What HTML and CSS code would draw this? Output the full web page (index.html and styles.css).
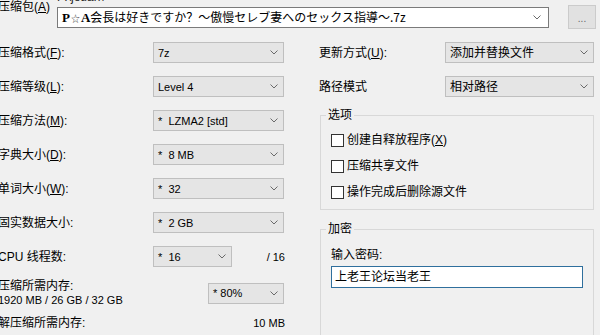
FILE: index.html
```html
<!DOCTYPE html>
<html lang="zh">
<head>
<meta charset="utf-8">
<title>添加到压缩包</title>
<link rel="stylesheet" href="styles.css">
</head>
<body>
<div class="dialog">
  <div class="top">
    <div class="top-lbl">压缩包(<u>A</u>)</div>
    <div class="archive">
      <div class="path">F:\jeuan\</div>
      <div class="combo white">
        <span class="jp"><b class="serif">P</b><span class="star">☆</span><b class="serif">A</b>会長は好きですか？～傲慢セレブ妻へのセックス指導～.7z</span>
        <svg class="chev" width="8" height="5" viewBox="0 0 8 5"><polyline points="0.5,0.5 4,4 7.5,0.5" fill="none" stroke="#6a6a6a" stroke-width="1"/></svg>
      </div>
    </div>
    <div class="browse">...</div>
  </div>

  <div class="main">
    <div class="left">
      <div class="row">
        <span>压缩格式(<u>F</u>):</span>
        <div class="combo"><span class="lat">7z</span><svg class="chev" width="8" height="5" viewBox="0 0 8 5"><polyline points="0.5,0.5 4,4 7.5,0.5" fill="none" stroke="#6a6a6a" stroke-width="1"/></svg></div>
      </div>
      <div class="row">
        <span>压缩等级(<u>L</u>):</span>
        <div class="combo"><span class="lat">Level 4</span><svg class="chev" width="8" height="5" viewBox="0 0 8 5"><polyline points="0.5,0.5 4,4 7.5,0.5" fill="none" stroke="#6a6a6a" stroke-width="1"/></svg></div>
      </div>
      <div class="row">
        <span>压缩方法(<u>M</u>):</span>
        <div class="combo"><span class="lat">*&nbsp; LZMA2 [std]</span><svg class="chev" width="8" height="5" viewBox="0 0 8 5"><polyline points="0.5,0.5 4,4 7.5,0.5" fill="none" stroke="#6a6a6a" stroke-width="1"/></svg></div>
      </div>
      <div class="row">
        <span>字典大小(<u>D</u>):</span>
        <div class="combo"><span class="lat">*&nbsp; 8 MB</span><svg class="chev" width="8" height="5" viewBox="0 0 8 5"><polyline points="0.5,0.5 4,4 7.5,0.5" fill="none" stroke="#6a6a6a" stroke-width="1"/></svg></div>
      </div>
      <div class="row">
        <span>单词大小(<u>W</u>):</span>
        <div class="combo"><span class="lat">*&nbsp; 32</span><svg class="chev" width="8" height="5" viewBox="0 0 8 5"><polyline points="0.5,0.5 4,4 7.5,0.5" fill="none" stroke="#6a6a6a" stroke-width="1"/></svg></div>
      </div>
      <div class="row">
        <span>固实数据大小:</span>
        <div class="combo"><span class="lat">*&nbsp; 2 GB</span><svg class="chev" width="8" height="5" viewBox="0 0 8 5"><polyline points="0.5,0.5 4,4 7.5,0.5" fill="none" stroke="#6a6a6a" stroke-width="1"/></svg></div>
      </div>
      <div class="row cpu">
        <span>CPU 线程数:</span>
        <div class="combo"><span class="lat">*&nbsp; 16</span><svg class="chev" width="8" height="5" viewBox="0 0 8 5"><polyline points="0.5,0.5 4,4 7.5,0.5" fill="none" stroke="#6a6a6a" stroke-width="1"/></svg></div>
        <span class="num lat">/ 16</span>
      </div>
      <div class="mem">
        <div class="mem-lbl">
          <div>压缩所需内存:</div>
          <div class="lat">1920 MB / 26 GB / 32 GB</div>
        </div>
        <div class="combo small"><span class="lat">* 80%</span><svg class="chev" width="8" height="5" viewBox="0 0 8 5"><polyline points="0.5,0.5 4,4 7.5,0.5" fill="none" stroke="#6a6a6a" stroke-width="1"/></svg></div>
      </div>
      <div class="unmem">
        <span>解压缩所需内存:</span>
        <span class="num lat">10 MB</span>
      </div>
    </div>

    <div class="right">
      <div class="rrow">
        <span>更新方式(<u>U</u>):</span>
        <div class="combo"><span>添加并替换文件</span><svg class="chev" width="8" height="5" viewBox="0 0 8 5"><polyline points="0.5,0.5 4,4 7.5,0.5" fill="none" stroke="#6a6a6a" stroke-width="1"/></svg></div>
      </div>
      <div class="rrow">
        <span>路径模式</span>
        <div class="combo"><span>相对路径</span><svg class="chev" width="8" height="5" viewBox="0 0 8 5"><polyline points="0.5,0.5 4,4 7.5,0.5" fill="none" stroke="#6a6a6a" stroke-width="1"/></svg></div>
      </div>
      <fieldset class="group options">
        <legend>选项</legend>
        <div class="check"><span class="box"></span><span>创建自释放程序(<u>X</u>)</span></div>
        <div class="check"><span class="box"></span><span>压缩共享文件</span></div>
        <div class="check"><span class="box"></span><span>操作完成后删除源文件</span></div>
      </fieldset>
      <fieldset class="group enc">
        <legend>加密</legend>
        <div class="pw-lbl">输入密码:</div>
        <div class="pw">上老王论坛当老王</div>
      </fieldset>
    </div>
  </div>
</div>
</body>
</html>
```

FILE: styles.css
```css
html, body {
  margin: 0;
  padding: 0;
  background: #f0f0f0;
  width: 600px;
  height: 335px;
  overflow: hidden;
}
body {
  font-family: "Liberation Sans", "Noto Sans CJK SC", sans-serif;
  font-size: 12px;
  line-height: 14px;
  color: #000;
}
u { text-decoration: underline; text-underline-offset: 1px; }
.lat { font-size: 11px; }

.dialog {
  margin-left: -2px;
  width: 600px;
}

/* top row */
.top {
  display: flex;
  align-items: flex-start;
  height: 29px;
}
.top-lbl {
  width: 59px;
  flex: none;
}
.archive {
  width: 492px;
  flex: none;
}
.path {
  height: 12px;
  line-height: 12px;
  margin-top: -9px;
  color: #222;
  white-space: nowrap;
}
.browse {
  flex: none;
  width: 26px;
  height: 22px;
  margin-left: 19px;
  margin-top: 5px;
  background: #e1e1e1;
  border: 1px solid #cbcbcb;
  color: #666;
  text-align: center;
  line-height: 26px;
  font-size: 10px;
}

/* combo boxes */
.combo {
  box-sizing: border-box;
  height: 21px;
  display: flex;
  align-items: center;
  justify-content: space-between;
  padding: 0 5px 0 4px;
  background: #e5e5e5;
  border: 1px solid #bfbfbf;
  white-space: nowrap;
  overflow: hidden;
}
.combo.white {
  margin-top: 4px;
  background: #fff;
  border-color: #7a7a7a;
  padding: 0 7px 0 4px;
}
.chev { flex: none; }
.jp {
  font-family: "Noto Sans CJK JP", sans-serif;
  font-size: 12px;
}
.serif {
  font-family: "Liberation Serif", serif;
  font-weight: bold;
  font-size: 13px;
}
.star {
  font-size: 9px;
  margin: 0 1px;
  color: #444;
}

/* main area */
.main {
  display: flex;
  margin-top: 13px;
}
.left {
  width: 286px;
  flex: none;
  display: flex;
  flex-direction: column;
}
.row {
  display: grid;
  grid-template-columns: 155px 131px;
  align-items: center;
  height: 21px;
  margin-bottom: 13px;
  white-space: nowrap;
}
.row.cpu {
  grid-template-columns: 155px 79px 1fr;
  margin-bottom: 0;
}
.num {
  text-align: right;
  margin-right: -1px;
}
.mem {
  display: flex;
  align-items: center;
  justify-content: space-between;
  margin-top: 12px;
  height: 28px;
}
.mem-lbl { white-space: nowrap; }
.combo.small { width: 76px; }
.unmem {
  display: flex;
  justify-content: space-between;
  align-items: center;
  margin-top: 9px;
  white-space: nowrap;
}

.right {
  margin-left: 35px;
  width: 275px;
  flex: none;
  display: flex;
  flex-direction: column;
}
.rrow {
  display: grid;
  grid-template-columns: 126px 149px;
  align-items: center;
  height: 21px;
  margin-bottom: 13px;
  white-space: nowrap;
}
.rrow:nth-child(2) { margin-bottom: 0; }

.group {
  margin: 0 0 0 1px;
  border: 1px solid #d8d8d8;
  padding: 0 0 0 10px;
  min-width: 0;
}
.group legend {
  padding: 0 2px;
  margin-left: -5px;
  line-height: 14px;
}
.options {
  margin-top: 11px;
  padding-bottom: 10px;
}
.check {
  display: flex;
  align-items: center;
  height: 14px;
  margin-top: 12px;
  white-space: nowrap;
}
.options legend + .check { margin-top: 11px; }
.box {
  box-sizing: border-box;
  width: 13px;
  height: 13px;
  border: 1px solid #333;
  background: #fff;
  margin-right: 3px;
  flex: none;
}
.enc {
  margin-top: 12px;
  padding-bottom: 60px;
}
.pw-lbl {
  margin-top: 12px;
}
.pw {
  box-sizing: border-box;
  margin-top: 4px;
  width: 252px;
  height: 22px;
  border: 1px solid #2f6f9d;
  background: #fff;
  padding: 0 3px;
  line-height: 20px;
  white-space: nowrap;
}
```
